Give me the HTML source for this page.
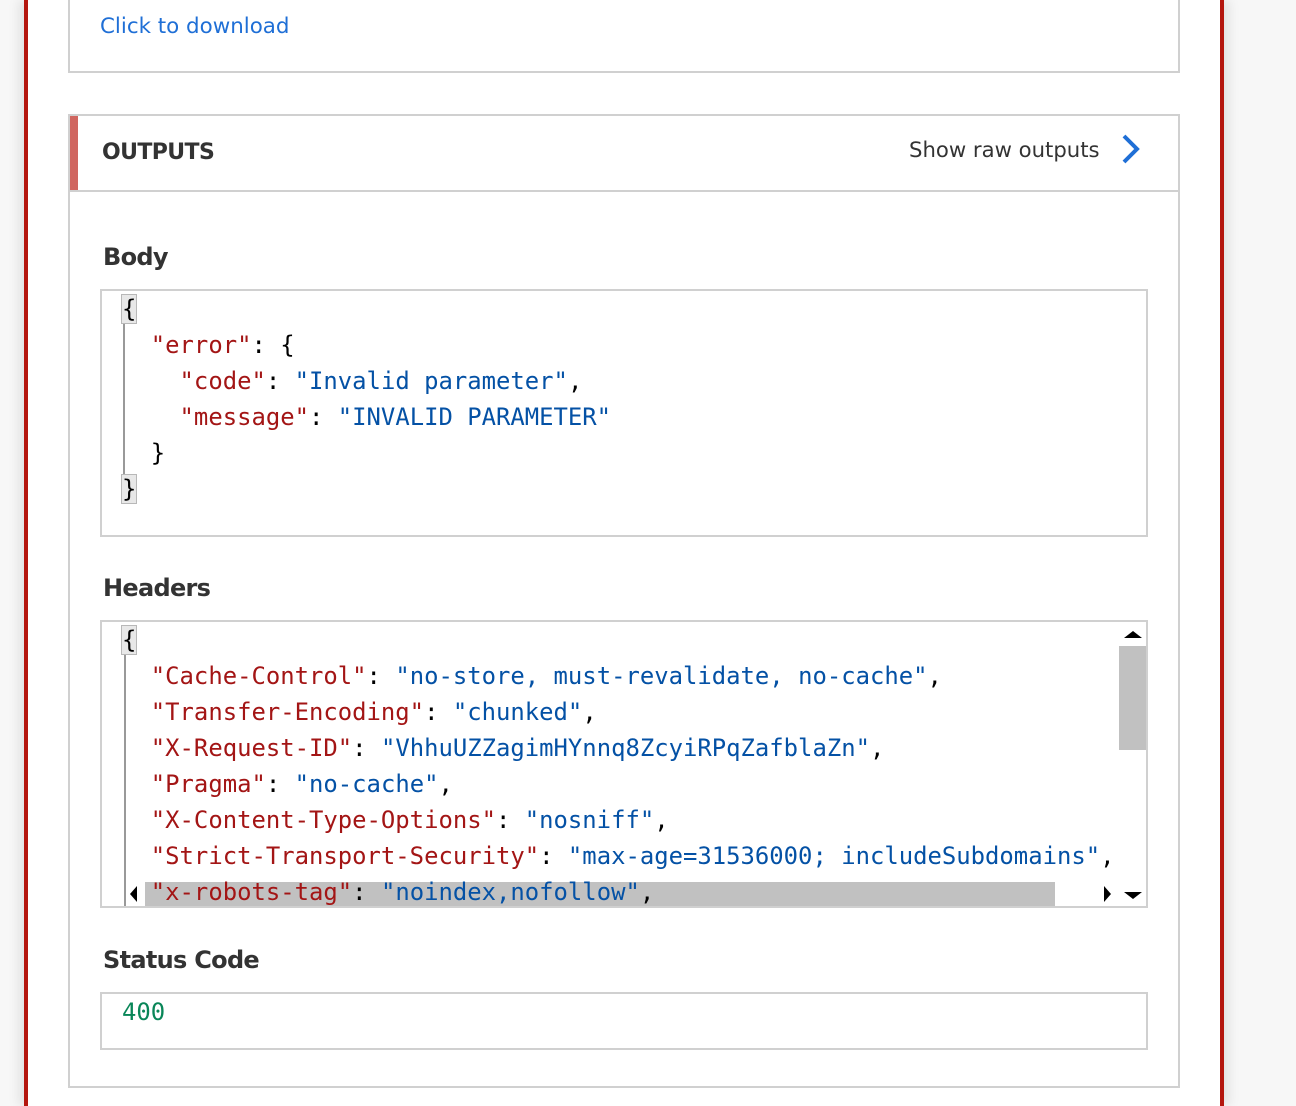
<!DOCTYPE html>
<html><head><meta charset="utf-8"><style>
body{margin:0;width:1296px;height:1106px;background:#f7f7f7;position:relative;overflow:hidden;font-family:"DejaVu Sans","Liberation Sans",sans-serif;}
.page{position:absolute;left:24px;top:0;width:1192px;height:1106px;background:#fff;border-left:4px solid #b4160e;border-right:4px solid #b4160e;box-shadow:6px 0 10px rgba(0,0,0,0.08),-6px 0 10px rgba(0,0,0,0.08);}
.ab{position:absolute;box-sizing:border-box;}
.card{border:2px solid #d0d0d0;}
.code{font-family:"DejaVu Sans Mono","Liberation Mono",monospace;font-size:23.9px;white-space:pre;position:absolute;line-height:36px;}
.k{color:#a31515}.s{color:#0451a5}.n{color:#098658}
.lbl{position:absolute;font-weight:bold;font-size:24px;color:#333;letter-spacing:-0.7px;}
.br{background:#e8e8e8;outline:1px solid #b8b8b8;}
</style></head><body>
<div class="page"></div>
<div class="ab card" style="left:68px;top:-4px;width:1112px;height:77px;border-top:none"></div>
<div class="ab" style="left:100px;top:14px;color:#1f6fd6;font-size:21.4px;">Click to download</div>
<div class="ab card" style="left:68px;top:114px;width:1112px;height:974px"></div>
<div class="ab" style="left:70px;top:116px;width:8px;height:75px;background:#d06660"></div>
<div class="ab" style="left:70px;top:190px;width:1108px;height:2px;background:#d0d0d0"></div>
<div class="lbl" style="left:102px;top:140px;font-size:22px;letter-spacing:-0.6px;">OUTPUTS</div>
<div class="ab" style="left:909px;top:137px;font-size:21.2px;color:#333;">Show raw outputs</div>
<svg class="ab" style="left:1118px;top:132px" width="26" height="34"><path d="M6 4 L19 17 L6 30" stroke="#1f6fd6" stroke-width="4" fill="none"/></svg>

<div class="lbl" style="left:103px;top:243px;">Body</div>
<div class="ab card" style="left:100px;top:289px;width:1048px;height:248px"></div>
<div class="ab" style="left:123px;top:322px;width:2px;height:152px;background:#999"></div>
<div class="code" style="left:122px;top:291px;"><span class="br">{</span>
  <span class="k">"error"</span>: {
    <span class="k">"code"</span>: <span class="s">"Invalid parameter"</span>,
    <span class="k">"message"</span>: <span class="s">"INVALID PARAMETER"</span>
  }
<span class="br">}</span></div>

<div class="lbl" style="left:103px;top:574px;">Headers</div>
<div class="ab card" style="left:100px;top:620px;width:1048px;height:288px;overflow:hidden">
<div class="ab" style="left:1017px;top:24px;width:28px;height:104px;background:#c1c1c1"></div>
<div class="ab" style="left:43px;top:260px;width:910px;height:26px;background:#c1c1c1"></div>
<div class="ab" style="left:22px;top:32px;width:2px;height:254px;background:#999"></div>
<div class="code" style="left:20px;top:0px;line-height:36px;"><span class="br">{</span>
  <span class="k">"Cache-Control"</span>: <span class="s">"no-store, must-revalidate, no-cache"</span>,
  <span class="k">"Transfer-Encoding"</span>: <span class="s">"chunked"</span>,
  <span class="k">"X-Request-ID"</span>: <span class="s">"VhhuUZZagimHYnnq8ZcyiRPqZafblaZn"</span>,
  <span class="k">"Pragma"</span>: <span class="s">"no-cache"</span>,
  <span class="k">"X-Content-Type-Options"</span>: <span class="s">"nosniff"</span>,
  <span class="k">"Strict-Transport-Security"</span>: <span class="s">"max-age=31536000; includeSubdomains"</span>,
  <span class="k">"x-robots-tag"</span>: <span class="s">"noindex,nofollow"</span>,</div>
<svg class="ab" style="left:0;top:0" width="1046" height="286">
<path d="M1022 16 L1031 9 L1040 16Z" fill="#000"/>
<path d="M1022 270 L1031 277 L1040 270Z" fill="#000"/>
<path d="M1002 264 L1009 272 L1002 280Z" fill="#000"/>
<path d="M35 264 L28 272 L35 280Z" fill="#000"/>
</svg>
</div>

<div class="lbl" style="left:103px;top:946px;">Status Code</div>
<div class="ab card" style="left:100px;top:992px;width:1048px;height:58px"></div>
<div class="code n" style="left:122px;top:994px;">400</div>
</body></html>
